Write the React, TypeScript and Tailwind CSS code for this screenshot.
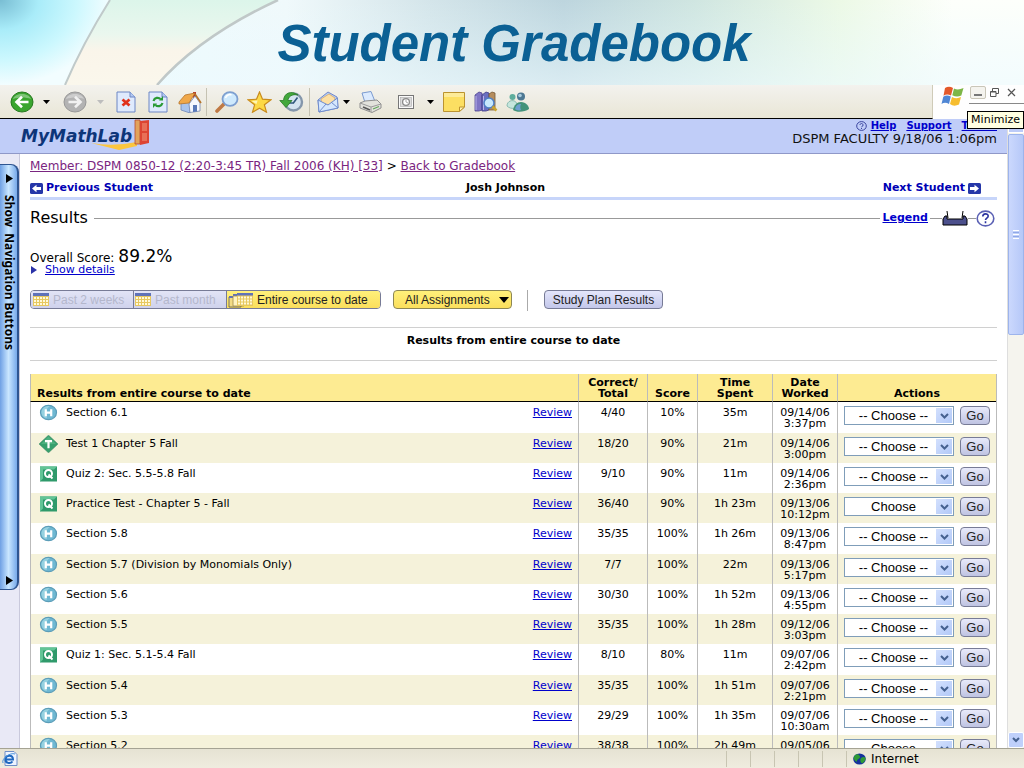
import type { ReactNode } from "react";

type Kind = "H" | "T" | "Q";

type Result = {
  kind: Kind;
  name: string;
  total: string;
  score: string;
  time: string;
  date: string;
  hour: string;
  action?: string;
};

const results: Result[] = [
  { kind: "H", name: "Section 6.1", total: "4/40", score: "10%", time: "35m", date: "09/14/06", hour: "3:37pm" },
  { kind: "T", name: "Test 1 Chapter 5 Fall", total: "18/20", score: "90%", time: "21m", date: "09/14/06", hour: "3:00pm" },
  { kind: "Q", name: "Quiz 2: Sec. 5.5-5.8 Fall", total: "9/10", score: "90%", time: "11m", date: "09/14/06", hour: "2:36pm" },
  { kind: "Q", name: "Practice Test - Chapter 5 - Fall", total: "36/40", score: "90%", time: "1h 23m", date: "09/13/06", hour: "10:12pm", action: "Choose" },
  { kind: "H", name: "Section 5.8", total: "35/35", score: "100%", time: "1h 26m", date: "09/13/06", hour: "8:47pm" },
  { kind: "H", name: "Section 5.7 (Division by Monomials Only)", total: "7/7", score: "100%", time: "22m", date: "09/13/06", hour: "5:17pm" },
  { kind: "H", name: "Section 5.6", total: "30/30", score: "100%", time: "1h 52m", date: "09/13/06", hour: "4:55pm" },
  { kind: "H", name: "Section 5.5", total: "35/35", score: "100%", time: "1h 28m", date: "09/12/06", hour: "3:03pm" },
  { kind: "Q", name: "Quiz 1: Sec. 5.1-5.4 Fall", total: "8/10", score: "80%", time: "11m", date: "09/07/06", hour: "2:42pm" },
  { kind: "H", name: "Section 5.4", total: "35/35", score: "100%", time: "1h 51m", date: "09/07/06", hour: "2:21pm" },
  { kind: "H", name: "Section 5.3", total: "29/29", score: "100%", time: "1h 35m", date: "09/07/06", hour: "10:30am" },
  { kind: "H", name: "Section 5.2", total: "38/38", score: "100%", time: "2h 49m", date: "09/05/06", hour: "9:14pm" },
];

function KindIcon({ kind }: { kind: Kind }) {
  return (
    <svg width="19" height="18" viewBox="0 0 19 18" className="shrink-0" aria-hidden="true">
      {kind === "H" && (
        <>
          <ellipse cx="9.5" cy="8.5" rx="8" ry="7.2" fill="#6fb8d2" stroke="#5b9db8" strokeWidth="1.2" />
          <path d="M2.500 7a7 6 0 0 1 8.500-4.700c-4 2-5 6-3 12a7 6 0 0 1-5.500-7.300z" fill="#a5dce6" opacity=".7" />
          <path d="M6.800 5.200v7M12.200 5.200v7M6.800 8.700h5.400" stroke="#fff" strokeWidth="2.200" fill="none" />
        </>
      )}
      {kind === "T" && (
        <>
          <path d="M9.500.2 18.900 9l-9.400 8.800L.1 9z" fill="#36a06d" stroke="#2b8059" strokeWidth=".6" />
          <path d="M9.500 1.500 17 9H2z" fill="#5dbb8c" opacity=".6" />
          <path d="M6 6.200h7M9.500 6.200v7" stroke="#fff" strokeWidth="2.200" fill="none" />
        </>
      )}
      {kind === "Q" && (
        <>
          <rect x="1" y="1.500" width="17" height="15" fill="#2f9a6b" />
          <path d="M1 1.500h17l-3 3H4v9l-3 3z" fill="#62c496" />
          <ellipse cx="9.500" cy="8.500" rx="3.500" ry="3.600" fill="none" stroke="#fff" strokeWidth="2" />
          <path d="m9.500 9.500 4 4" stroke="#fff" strokeWidth="1.900" />
        </>
      )}
    </svg>
  );
}

function ToolButton({ label, className, children }: { label: string; className: string; children: ReactNode }) {
  return (
    <button type="button" aria-label={label} className={`flex h-full shrink-0 items-center justify-center ${className}`}>
      {children}
    </button>
  );
}

function Caret({ color = "#000" }: { color?: string }) {
  return (
    <svg width="7" height="4" viewBox="0 0 7 4" aria-hidden="true">
      <path d="M0 0h7L3.500 4z" fill={color} />
    </svg>
  );
}

function ArrowDisc({ green }: { green?: boolean }) {
  return (
    <svg width="24" height="22" viewBox="0 0 24 22" aria-hidden="true">
      <ellipse cx="12" cy="11" rx="11" ry="10" fill={green ? "#3aa52f" : "#b3b3b3"} stroke={green ? "#27791f" : "#989898"} />
      <path d="M3 8c2-6 15-7 18 0-5-2-12-2-18 0z" fill="#fff" opacity=".35" />
      <path
        d={green ? "M18.500 11H7M12 5.800 6.500 11l5.500 5.200" : "M5.500 11H17M12 5.800l5.500 5.200-5.500 5.200"}
        fill="none"
        stroke={green ? "#fff" : "#f1f1f1"}
        strokeWidth="2.600"
      />
    </svg>
  );
}

function PageIcon({ children }: { children: ReactNode }) {
  return (
    <svg width="20" height="22" viewBox="0 0 20 22" aria-hidden="true">
      <path d="M1 1h13l5 5v15H1z" fill="#dfeafd" stroke="#6c86c4" />
      <path d="M14 1v5h5" fill="#b2c8f2" stroke="#6c86c4" />
      {children}
    </svg>
  );
}

function Calendar({ grid = "#e7c860" }: { grid?: string }) {
  return (
    <svg width="16" height="13" viewBox="0 0 16 13" aria-hidden="true">
      <rect width="16" height="13" fill={grid} />
      <rect width="16" height="3" fill="#5f72b8" />
      <path d="M1 4h2v2H1zM4 4h2v2H4zM7 4h2v2H7zM10 4h2v2h-2zM13 4h2v2h-2zM1 7h2v2H1zM4 7h2v2H4zM7 7h2v2H7zM10 7h2v2h-2zM13 7h2v2h-2zM1 10h2v2H1zM4 10h2v2H4zM7 10h2v2H7zM10 10h2v2h-2zM13 10h2v2h-2z" fill="#fff9d8" />
    </svg>
  );
}

function SquareArrow({ right }: { right?: boolean }) {
  return (
    <svg width="13" height="11" viewBox="0 0 13 11" className="shrink-0" aria-hidden="true">
      <rect width="13" height="11" rx="1.500" fill="#2536a8" />
      <path d={right ? "M2 4h4.500V1.800L11 5.500 6.500 9.200V7H2z" : "M11 4H6.500V1.800L2 5.500l4.500 3.700V7H11z"} fill="#fff" />
    </svg>
  );
}

function TitleBanner() {
  return (
    <header className="relative h-[85px] shrink-0 overflow-hidden bg-[linear-gradient(90deg,#cdf8fd_0%,#eefbfd_12%,#f0f9fb_28%,#d4e5ea_42%,#bdd5de_55%,#d0e6e1_68%,#ecf9e6_82%,#fdfffb_93%)]">
      <svg className="absolute inset-0 h-full w-full" viewBox="0 0 1024 85" preserveAspectRatio="none" aria-hidden="true">
        <defs>
          <linearGradient id="wedge" x1="0" y1="0" x2="0" y2="1">
            <stop offset="0" stopColor="#dcf5ea" />
            <stop offset=".4" stopColor="#eaf7ee" />
            <stop offset=".6" stopColor="#faf5ea" />
            <stop offset="1" stopColor="#faf7ec" />
          </linearGradient>
          <radialGradient id="sky" cx="0" cy="0" r="1">
            <stop offset="0" stopColor="#79bdd3" />
            <stop offset=".35" stopColor="#a9ecf9" />
            <stop offset=".7" stopColor="#ccf8fe" />
            <stop offset="1" stopColor="#f2fdff" />
          </radialGradient>
          <linearGradient id="fade" x1="0" y1="0" x2="0" y2="1">
            <stop offset="0" stopColor="#e8faff" stopOpacity="0" />
            <stop offset="1" stopColor="#ecfaff" stopOpacity=".6" />
          </linearGradient>
        </defs>
        <path d="M0 0h1024v85H0z" fill="url(#fade)" />
        <path d="M0 0h110Q83 43 65 85H0z" fill="url(#sky)" />
        <path d="M110 0h168Q200 36 157 85H65Q83 43 110 0z" fill="url(#wedge)" />
        <path d="M110 0Q83 43 65 85" fill="none" stroke="#c0caca" strokeWidth="2" />
        <path d="M278 0Q200 36 157 85" fill="none" stroke="#c0c8c8" strokeWidth="2.500" />
      </svg>
      <h1 className="relative pt-2 pl-1 text-center font-['Liberation_Sans',sans-serif] text-[51px] leading-[72px] font-bold text-[#0b6094] italic">
        Student Gradebook
      </h1>
    </header>
  );
}

function Toolbar() {
  return (
    <div className="flex h-[34px] shrink-0">
      <div className="flex min-w-0 flex-1 items-center border-r border-b border-r-[#cfcbb8] border-b-black bg-linear-to-b from-[#f3f2ee] to-[#e9e6d6] pl-2">
        <ToolButton label="Back" className="w-7"><ArrowDisc green /></ToolButton>
        <ToolButton label="Back history" className="w-5"><Caret /></ToolButton>
        <ToolButton label="Forward" className="w-[38px]"><ArrowDisc /></ToolButton>
        <ToolButton label="Forward history" className="mr-1 w-3"><Caret color="#bdbdbd" /></ToolButton>
        <ToolButton label="Stop" className="w-8">
          <PageIcon>
            <path d="m6.500 8.500 7 6M13.500 8.500l-7 6" stroke="#e0321c" strokeWidth="2.800" />
          </PageIcon>
        </ToolButton>
        <ToolButton label="Refresh" className="w-8">
          <PageIcon>
            <path d="M5.500 10c1-3.500 5-4 7-2M14.500 12c-1 3.500-5 4-7 2" fill="none" stroke="#2a9a35" strokeWidth="2.200" />
            <path d="M11 9.500h4V5zM9 12.500H5V17z" fill="#2a9a35" />
          </PageIcon>
        </ToolButton>
        <ToolButton label="Home" className="w-8">
          <svg width="24" height="22" viewBox="0 0 24 22" aria-hidden="true">
            <path d="M15 1h3v6h-3z" fill="#b73a2b" />
            <path d="M3 11v8l9 3V9z" fill="#a9c4ee" stroke="#6f86b8" strokeWidth=".8" />
            <path d="M11 13l6-8 5 7v8l-10 1.500z" fill="#f5f8ff" stroke="#7386b0" strokeWidth=".8" />
            <path d="M1 11 7 4l10-2-6 10-10 1z" fill="#f0a84a" stroke="#b5742b" strokeWidth=".8" />
            <path d="m17 3 6 9" stroke="#b5742b" strokeWidth="1.600" />
            <path d="M15 14h4v6.500l-4 .5z" fill="#5878b8" />
          </svg>
        </ToolButton>
        <span className="mr-1 h-7 w-px bg-[#c5c2b2]" />
        <ToolButton label="Search" className="w-8">
          <svg width="24" height="22" viewBox="0 0 24 22" aria-hidden="true">
            <path d="m2 20 7-7" stroke="#c07a45" strokeWidth="3.600" strokeLinecap="round" />
            <ellipse cx="15" cy="8" rx="7.500" ry="6.800" fill="#cfeafd" stroke="#7d9fd0" strokeWidth="1.800" />
            <path d="M10.500 7c1-3 4-4 6-3" stroke="#fff" strokeWidth="1.500" fill="none" />
          </svg>
        </ToolButton>
        <ToolButton label="Favorites" className="w-8">
          <svg width="25" height="22" viewBox="0 0 25 22" aria-hidden="true">
            <path d="m12.500 1 3 7.200 8.500.6-6.600 5 2.100 7.400-7-4-7 4 2.100-7.400L1 8.800l8.500-.6z" fill="#fcd946" stroke="#c98b1c" strokeWidth="1.200" />
            <path d="m12.500 3.500-2 6-6 .5 5 3z" fill="#fff5b5" />
          </svg>
        </ToolButton>
        <ToolButton label="History" className="w-8">
          <svg width="25" height="22" viewBox="0 0 25 22" aria-hidden="true">
            <ellipse cx="14.500" cy="11" rx="8.500" ry="8.500" fill="#d5e4f1" stroke="#8496ab" strokeWidth="2.400" />
            <path d="M14 12.500 18.500 6.500M14 12H9.500" stroke="#31587e" strokeWidth="1.600" />
            <path d="M19 4C12-1 5 2 4.500 9.500H.8l6.200 7 6-7H9C9 6 13 2.500 19 4z" fill="#43a83c" stroke="#2b7b2a" strokeWidth=".8" />
          </svg>
        </ToolButton>
        <span className="mr-1 ml-[2px] h-7 w-px bg-[#c5c2b2]" />
        <ToolButton label="Mail" className="w-7">
          <svg width="22" height="22" viewBox="0 0 22 22" aria-hidden="true">
            <path d="M1 9 11 1l9 5 1 11-19 4z" fill="#b3cdf5" stroke="#7388c8" />
            <path d="m4 8 8-5 6 4-1 5-6 2-6-1z" fill="#fde0a4" stroke="#d9a45c" strokeWidth=".7" />
            <path d="m1 9 10 5 9.500-7L21 17 2 21z" fill="#d5e7fd" stroke="#6f8ccd" />
            <path d="m2 21 7-8M21 17l-7-6" stroke="#6f8ccd" />
          </svg>
        </ToolButton>
        <ToolButton label="Mail options" className="w-2"><Caret /></ToolButton>
        <ToolButton label="Print" className="ml-1 w-8">
          <svg width="24" height="22" viewBox="0 0 24 22" aria-hidden="true">
            <path d="m4 2 9-1.500 4 10-10 1z" fill="#dbeafe" stroke="#7a9ad0" />
            <path d="m2 12 5-2 12-1 4 4v4l-9 4.500L2 17z" fill="#e2e2dc" stroke="#8e8e8e" />
            <path d="m2 12 11 4 10-3M13 16v5" stroke="#9a9a9a" fill="none" />
            <path d="m5 16 7 3" stroke="#555" strokeWidth="1.500" />
            <path d="m15 18 6-2.500" stroke="#61a45a" strokeWidth="1.200" />
          </svg>
        </ToolButton>
        <ToolButton label="Size" className="ml-1 w-8">
          <svg width="16" height="14" viewBox="0 0 16 14" aria-hidden="true">
            <rect x=".5" y=".5" width="15" height="13" fill="#fafafa" stroke="#777" />
            <rect x="2.500" y="2.500" width="11" height="9" fill="#ddd" stroke="#aaa" strokeWidth=".6" />
            <circle cx="8" cy="7" r="3.400" fill="#fff" stroke="#8a8a8a" strokeWidth="1.300" />
            <path d="M8 4.500V7l2 1" fill="none" stroke="#aaa" />
          </svg>
        </ToolButton>
        <ToolButton label="Size options" className="w-4"><Caret /></ToolButton>
        <ToolButton label="Notes" className="w-8">
          <svg width="22" height="20" viewBox="0 0 22 20" aria-hidden="true">
            <path d="M.5.500h21V15l-5 4.500H.500z" fill="#fcdf62" stroke="#bb9330" />
            <path d="M1 1h20v4H1z" fill="#fdeb98" />
            <path d="M21.500 15h-5v4.500z" fill="#fff3b5" stroke="#bb9330" />
          </svg>
        </ToolButton>
        <ToolButton label="Research" className="w-8">
          <svg width="24" height="21" viewBox="0 0 24 21" aria-hidden="true">
            <path d="m1 4 4-3 3 1v17l-3 1H1z" fill="#7f75c4" stroke="#4c4591" strokeWidth=".8" />
            <path d="m8 4 4-3 3 1v17l-3 1H8z" fill="#6a6fc0" stroke="#413b86" strokeWidth=".8" />
            <path d="m15 3 3-2 3 1v17h-6z" fill="#b58d5e" stroke="#775a38" strokeWidth=".8" />
            <path d="M2 5v14M9.500 5v14" stroke="#b9b2ea" />
            <circle cx="15" cy="12" r="5" fill="#c7e8fc" stroke="#4d7fc5" strokeWidth="1.500" />
            <path d="m18.500 15.500 4 4" stroke="#c9a42e" strokeWidth="2.500" />
          </svg>
        </ToolButton>
        <ToolButton label="Messenger" className="w-8">
          <svg width="24" height="20" viewBox="0 0 24 20" aria-hidden="true">
            <circle cx="6.500" cy="5" r="3" fill="#5fae9d" />
            <path d="M1 14c0-7 10-7 10-1l-2 3c-3 1-6 0-8-2z" fill="#c6e6dd" stroke="#6aa79c" strokeWidth=".7" />
            <circle cx="15" cy="4.500" r="4" fill="#4d7893" />
            <circle cx="14" cy="3.500" r="1.800" fill="#a9cde0" />
            <path d="M7 18c1-5 4-8 8-8 5 0 8 4 8 7-4 3-12 4-16 1z" fill="#43937a" />
            <path d="M9 17c1-4 3-5 6-5-1 2-1 4 0 6-2 1-5 0-6-1z" fill="#6f9fd0" />
          </svg>
        </ToolButton>
      </div>
      <div className="relative flex w-[91px] shrink-0 items-start bg-[#fefefe] pl-2">
        <svg width="24" height="22" viewBox="0 0 24 22" aria-hidden="true">
          <path d="M4 3q4-2.500 8 0l-2 7.500q-4-2.200-7.500.2z" fill="#e3592a" />
          <path d="M13 3.500q4 2 9.500-.5l-2.200 7.500q-4.500 2.300-9-.3z" fill="#7db646" />
          <path d="M2.300 11.800q3.500-2.300 7.500-.2L8 19q-4-2.300-7.500 0z" fill="#4f86d4" />
          <path d="M11 12q4.500 2.300 9 .1L18 19.500q-5 2.500-9-.4z" fill="#f6bd2f" />
        </svg>
        <div className="ml-[5px] flex items-center gap-2">
          <button type="button" aria-label="Minimize window" className="mt-px flex h-[13px] w-4 items-end justify-center rounded-xs border border-[#c9c6b8] bg-[#f4f3ee] pb-[2px]">
            <span className="h-[2px] w-2 bg-[#777]" />
          </button>
          <button type="button" aria-label="Restore window" className="-ml-1">
            <svg width="9" height="9" viewBox="0 0 9 9" fill="none" stroke="#555" aria-hidden="true">
              <path d="M2.500 3V.5h6v5H6M.5 3.500h5.500v5H.5zM.5 4h5.500" />
            </svg>
          </button>
          <button type="button" aria-label="Close window">
            <svg width="9" height="9" viewBox="0 0 9 9" stroke="#555" strokeWidth="1.200" aria-hidden="true">
              <path d="m1 1 7 7M8 1 1 8" />
            </svg>
          </button>
        </div>
        <span className="absolute top-[18px] right-0 h-px w-[55px] bg-[#888]" />
        <span role="tooltip" className="absolute top-[26px] right-0 z-10 border border-black bg-[#ffffe1] px-[3px] text-[11px] leading-4">
          Minimize
        </span>
      </div>
    </div>
  );
}

function SiteHeader() {
  return (
    <div className="flex h-[35px] items-start justify-between border-b border-[#8f98c8] bg-[#c0cdf8] pr-[10px] pl-[21px]">
      <div className="relative flex">
        <span className="relative z-10 pt-[7px] text-[17px] leading-5 font-bold text-[#0d3579] italic">MyMathLab</span>
        <svg width="64" height="32" viewBox="0 0 64 32" className="absolute top-0 left-[68px]" aria-hidden="true">
          <path d="M2 24q22 4 46-1v4L30 31z" fill="#fbc63f" />
          <path d="M46 1h5v24h-5z" fill="#e2a35c" stroke="#b84a2f" strokeWidth=".8" />
          <path d="m51 2 9-1v23l-9 2z" fill="#dd4433" />
          <path d="M53 4h5v8h-5zM53 14h5v8h-5z" fill="#e86f58" />
        </svg>
      </div>
      <div className="text-right">
        <div className="flex h-[13px] items-center justify-end gap-[10px] text-[10px] leading-[13px] font-bold text-[#0000cc]">
          <a href="#help" className="flex items-center gap-1">
            <svg width="11" height="10" viewBox="0 0 11 10" fill="none" stroke="#3a459f" aria-hidden="true">
              <ellipse cx="5.500" cy="5" rx="4.800" ry="4.400" />
              <path d="M4 4c0-2 3-2 3 0S5.500 5 5.500 6.200M5.500 7v1" />
            </svg>
            <span className="underline">Help</span>
          </a>
          <a href="#support" className="underline">Support</a>
          <a href="#tutors" className="underline">Tutors</a>
        </div>
        <p className="text-[13px] leading-[14px] text-[#111]">DSPM FACULTY 9/18/06 1:06pm</p>
      </div>
    </div>
  );
}

function SideTab() {
  return (
    <aside className="w-5 shrink-0 border-r border-[#c9c9dc] bg-[#e9e9f6]">
      <button
        type="button"
        className="mt-[10px] flex h-[426px] w-[19px] flex-col items-center rounded-r-lg border-y border-r-2 border-[#2f5591] bg-linear-to-r from-[#6fa0e4] via-[#c9e6ff] to-[#78a9ea] pt-[9px] pb-1"
      >
        <svg width="8" height="9" viewBox="0 0 8 9" aria-hidden="true"><path d="M1 0v9l7-4.500z" /></svg>
        <span className="mt-3 font-['Noto_Sans',sans-serif] text-xs leading-4 font-bold whitespace-pre [writing-mode:vertical-rl]">
          {"Show  Navigation Buttons"}
        </span>
        <svg width="8" height="9" viewBox="0 0 8 9" className="mt-auto" aria-hidden="true"><path d="M1 0v9l7-4.500z" /></svg>
      </button>
    </aside>
  );
}

function Filters() {
  return (
    <div className="mt-[14px] flex h-[19px] items-stretch font-['Liberation_Sans',sans-serif] text-xs text-[#222]">
      <div className="flex w-[351px] overflow-hidden rounded-[4px] border border-[#777b96]">
        <button type="button" className="flex w-[103px] items-center gap-1 border-r border-[#777b96] bg-linear-to-b from-[#e2e4f6] to-[#cfd2ec] pl-[2px] text-[#b4b7cc]">
          <Calendar />
          Past 2 weeks
        </button>
        <button type="button" className="flex w-[93px] items-center gap-1 border-r border-[#777b96] bg-linear-to-b from-[#e2e4f6] to-[#cfd2ec] pl-[1px] text-[#b4b7cc]">
          <Calendar />
          Past month
        </button>
        <button type="button" className="flex flex-1 items-center bg-linear-to-b from-[#fff07a] to-[#fbdf5c] pl-px">
          <svg width="25" height="16" viewBox="0 0 25 16" className="mr-1" aria-hidden="true">
            <path d="M1 5h12v10H1z" fill="#f3dc85" stroke="#555" strokeWidth=".8" />
            <path d="M1 4h4v2H1zM5 2h5v2H5z" fill="#5f72b8" />
            <path d="M5 4h11v10H5z" fill="#fff3c0" stroke="#a18c46" strokeWidth=".8" />
            <path d="M9 1h16v13H9z" fill="#e7c860" />
            <path d="M9 1h16v2.500H9z" fill="#5f72b8" />
            <path d="M10 4.500h2v2h-2zM13 4.500h2v2h-2zM16 4.500h2v2h-2zM19 4.500h2v2h-2zM22 4.500h2v2h-2zM10 7.500h2v2h-2zM13 7.500h2v2h-2zM16 7.500h2v2h-2zM19 7.500h2v2h-2zM22 7.500h2v2h-2zM10 10.500h2v2h-2zM13 10.500h2v2h-2zM16 10.500h2v2h-2zM19 10.500h2v2h-2zM22 10.500h2v2h-2z" fill="#fff9d8" />
          </svg>
          Entire course to date
        </button>
      </div>
      <button type="button" className="ml-3 flex w-[119px] items-center justify-between rounded-[4px] border border-[#8d8754] bg-linear-to-b from-[#fff07a] to-[#fbdf5c] pr-[2px] pl-[11px]">
        All Assignments
        <svg width="10" height="6" viewBox="0 0 10 6" aria-hidden="true"><path d="M0 0h10L5 6z" /></svg>
      </button>
      <span className="ml-[15px] h-[21px] w-px bg-[#aaa]" />
      <button type="button" className="ml-4 w-[119px] rounded-[4px] border border-[#777b96] bg-linear-to-b from-[#e4e6fb] to-[#c3c7ea]">
        Study Plan Results
      </button>
    </div>
  );
}

function ResultsTable() {
  const head = "border-b border-black border-l border-l-[#bbb] pb-[2px] align-bottom font-bold";
  const cell = "border-l border-[#bbb] pt-[5px] align-top text-center";

  return (
    <table className="mt-[13px] w-full table-fixed border-separate border-spacing-0 border-r border-[#bbb] text-[11px] leading-[11px]">
      <colgroup>
        <col />
        <col className="w-[69px]" />
        <col className="w-[50px]" />
        <col className="w-[75px]" />
        <col className="w-[65px]" />
        <col className="w-[159px]" />
      </colgroup>
      <thead>
        <tr className="h-7 bg-[#fdeb92]">
          <th className={`${head} pl-[6px] text-left`}>Results from entire course to date</th>
          <th className={head}>Correct/<br />Total</th>
          <th className={head}>Score</th>
          <th className={head}>Time<br />Spent</th>
          <th className={head}>Date<br />Worked</th>
          <th className={head}>Actions</th>
        </tr>
      </thead>
      <tbody>
        {results.map((row) => (
          <tr key={row.name} className="h-[30px] even:bg-[#f5f2da] nth-[4n+1]:h-[31px]">
            <td className="border-l border-[#bbb] pt-[2px] align-top">
              <div className="flex pr-[6px] pl-2">
                <KindIcon kind={row.kind} />
                <span className="ml-2 flex-1 pt-[3px]">{row.name}</span>
                <a href="#review" className="pt-[3px] text-[#0000cc] underline">Review</a>
              </div>
            </td>
            <td className={cell}>{row.total}</td>
            <td className={cell}>{row.score}</td>
            <td className={cell}>{row.time}</td>
            <td className={cell}>{row.date}<br />{row.hour}</td>
            <td className="border-l border-[#bbb] pt-1 align-top">
              <div className="flex gap-[6px] pl-[6px] font-['Liberation_Sans',sans-serif]">
                <div className="relative h-[19px] w-[110px] border border-[#7f9db9] bg-white">
                  <select aria-label={`Action for ${row.name}`} className="h-full w-full appearance-none pr-[11px] text-center text-[13px] leading-[17px] text-black [text-align-last:center]">
                    <option>{row.action ?? "-- Choose --"}</option>
                  </select>
                  <span className="pointer-events-none absolute inset-y-px right-px flex w-4 items-center justify-center bg-linear-to-br from-[#d3e0fd] to-[#b2c9f8]">
                    <svg width="9" height="6" viewBox="0 0 9 6" fill="none" stroke="#45618f" strokeWidth="2" aria-hidden="true">
                      <path d="m1 1 3.500 3.500L8 1" />
                    </svg>
                  </span>
                </div>
                <button type="button" className="h-[19px] w-[30px] rounded-[4px] border border-[#777b96] bg-linear-to-b from-[#e8eafa] to-[#bfc3e2] text-[13px] leading-4 text-[#222]">
                  Go
                </button>
              </div>
            </td>
          </tr>
        ))}
      </tbody>
    </table>
  );
}

function ScrollBar() {
  return (
    <div className="flex w-4 shrink-0 flex-col bg-[#f5f4ee]">
      <span className="h-[14px] border border-white bg-[#bccbf8]" />
      <span className="mt-px flex h-[201px] flex-col items-center justify-center gap-px rounded-xs border border-[#9db4ec] bg-linear-to-r from-[#cbd8fd] to-[#b6c8f8]">
        <i className="h-px w-[6px] bg-white" />
        <i className="h-px w-[6px] bg-[#90a8e6]" />
        <i className="h-px w-[6px] bg-white" />
        <i className="h-px w-[6px] bg-[#90a8e6]" />
        <i className="h-px w-[6px] bg-white" />
      </span>
      <span className="mt-auto flex h-4 items-center justify-center rounded-xs border border-white bg-[#bfd0fb]">
        <svg width="8" height="6" viewBox="0 0 8 6" fill="none" stroke="#45618f" strokeWidth="2" aria-hidden="true">
          <path d="m1 1 3 3 3-3" />
        </svg>
      </span>
    </div>
  );
}

function StatusBar() {
  return (
    <footer className="flex h-5 shrink-0 items-center border-t border-[#a5a393] bg-linear-to-b from-[#e6e3d3] to-[#efecdf]">
      <svg width="16" height="15" viewBox="0 0 16 15" className="ml-[2px]" aria-hidden="true">
        <path d="M3 .5h9l3 3v11H3z" fill="#eef4ff" stroke="#6f8fc8" />
        <path d="M3 8.500h8c0-5-7-5-7.500-.5-.5 4.500 5 5 7 2.500" fill="none" stroke="#1f68c0" strokeWidth="2" />
        <path d="M1 12C-1 8 8 1 13 3" fill="none" stroke="#4a95dc" />
      </svg>
      <div className="ml-auto flex h-4 w-[298px] divide-x divide-[#c8c5b2] border-l border-[#c8c5b2] text-xs leading-4">
        <span className="w-6" />
        <span className="w-6" />
        <span className="w-6" />
        <span className="w-6" />
        <span className="w-6" />
        <span className="flex flex-1 items-center gap-[5px] pl-[6px]">
          <svg width="13" height="12" viewBox="0 0 13 12" aria-hidden="true">
            <ellipse cx="6.500" cy="6" rx="6.300" ry="5.600" fill="#14329c" />
            <path d="M2 2c3-2 5 0 5 2S4 6 4 8 1 7 .5 5zM8 5c2-2 5-1 4.500 1S10 11 8.500 10 7 6 8 5z" fill="#2e9b36" />
          </svg>
          Internet
        </span>
      </div>
    </footer>
  );
}

export default function App() {
  return (
    <div className="flex h-screen flex-col overflow-hidden bg-white font-['DejaVu_Sans',sans-serif] text-black">
      <TitleBanner />
      <Toolbar />
      <div className="flex min-h-0 flex-1">
        <div className="flex min-w-0 flex-1 flex-col border-r border-[#dedede]">
          <SiteHeader />
          <div className="flex min-h-0 flex-1 overflow-hidden">
            <SideTab />
            <main className="min-w-0 flex-1 px-[10px] text-[11px]">
              <nav className="mt-1 text-xs leading-4">
                <a href="#member" className="text-[#7a2580] underline">Member: DSPM 0850-12 (2:20-3:45 TR) Fall 2006 (KH) [33]</a>
                {" > "}
                <a href="#gradebook" className="text-[#7a2580] underline">Back to Gradebook</a>
              </nav>

              <div className="mt-[6px] grid h-5 grid-cols-3 items-center border-b-[3px] border-[#c7d5fa] font-bold">
                <a href="#previous" className="flex items-center gap-[3px] text-[#0000b4]">
                  <SquareArrow />
                  Previous Student
                </a>
                <span className="pr-4 text-center">Josh Johnson</span>
                <a href="#next" className="flex items-center justify-end gap-[3px] pr-4 text-[#0000b4]">
                  Next Student
                  <SquareArrow right />
                </a>
              </div>

              <div className="mt-2 flex h-5 items-center pr-[2px]">
                <h2 className="mr-[6px] text-base leading-5">Results</h2>
                <span className="h-px flex-1 bg-[#999]" />
                <a href="#legend" className="mx-[2px] font-bold text-[#0000cc] underline">Legend</a>
                <span className="h-px w-3 bg-[#999]" />
                <button type="button" aria-label="Print results">
                  <svg width="26" height="16" viewBox="0 0 26 16" aria-hidden="true">
                    <path d="M6 8 5 1M20 8l1-7" stroke="#000" />
                    <path d="m6.500 1 1 7h11l1-7z" fill="#fff" />
                    <path d="M5 6H3L1 9v6h24V9l-2-3h-2v3H5z" fill="#4c508c" stroke="#000" />
                  </svg>
                </button>
                <span className="h-px w-2 bg-[#999]" />
                <button type="button" aria-label="Help">
                  <svg width="19" height="17" viewBox="0 0 19 17" fill="none" aria-hidden="true">
                    <ellipse cx="9.500" cy="8.500" rx="8.300" ry="7.400" stroke="#5a60b4" strokeWidth="1.600" />
                    <path d="M6.800 6.500c0-3.500 5.400-3.300 5.400-.4 0 2-2.700 2-2.700 3.900M9.500 11.200v2" stroke="#2b33a0" strokeWidth="1.600" />
                  </svg>
                </button>
              </div>

              <p className="mt-5 flex h-4 items-baseline gap-1 text-xs leading-4">
                Overall Score: <span className="text-[17px] leading-4">89.2%</span>
              </p>
              <a href="#details" className="flex h-3 items-center gap-2 leading-3 text-[#0000cc]">
                <svg width="7" height="8" viewBox="0 0 7 8" aria-hidden="true"><path d="M1 0v8l6-4z" fill="#2b33a8" /></svg>
                <span className="underline">Show details</span>
              </a>

              <Filters />

              <h3 className="mt-[18px] h-[34px] border-y border-[#d0d0d0] pt-[6px] text-center leading-[14px] font-bold">
                Results from entire course to date
              </h3>

              <ResultsTable />
            </main>
          </div>
        </div>
        <ScrollBar />
      </div>
      <StatusBar />
    </div>
  );
}
